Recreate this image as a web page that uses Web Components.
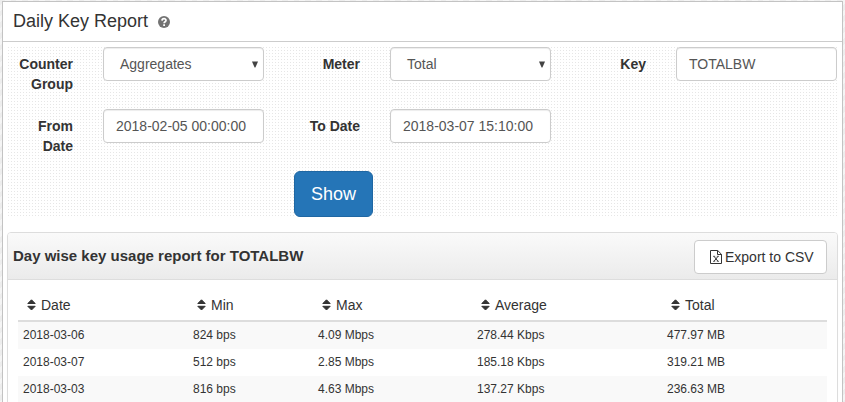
<!DOCTYPE html>
<html lang="en">
<head>
<meta charset="utf-8">
<title>Daily Key Report</title>
<style>
html, body { height: 100%; margin: 0; overflow: hidden; }
body {
  font: 14px/20px "Liberation Sans", Arial, sans-serif; color: #333;
  background: #f1f1f1 repeating-linear-gradient(135deg, #ededed 0 4px, #f5f5f5 4px 8px);
}
</style>
</head>
<body>
<report-page></report-page>

<template id="t-page">
<style>
:host { display: block; box-sizing: border-box; height: 402px; padding: 1px 2px 0; }
.frame { box-sizing: border-box; width: 841px; height: 420px; background: #fff; border: 1px solid #c3c3c3; }
header { box-sizing: border-box; height: 40px; padding: 8px 10px 10px; border-bottom: 1px solid #ccc; display: flex; align-items: center; gap: 10px; }
h1 { margin: 0; font-size: 18px; font-weight: 400; line-height: 20px; }
header svg { width: 12px; height: 12px; margin-top: 3px; }
.form {
  margin: 5px 5px 0; width: 830px; height: 170px; padding: 0; display: grid;
  grid-template-columns: 256px 287px 286px; grid-template-rows: 34px 34px 46px; row-gap: 28px;
  background: linear-gradient(90deg, transparent 1px, #fff 1px) 0 0 / 3px 3px, linear-gradient(#e6e6e6 1px, #fff 1px) 0 0 / 3px 3px;
}
show-button { grid-column: 1 / -1; margin-left: 286px; justify-self: start; }
report-panel { margin: 15px 0 0 4px; }
</style>
<div class="frame">
  <header>
    <h1>Daily Key Report</h1>
    <svg viewBox="0 0 12 12"><circle cx="6" cy="6" r="6" fill="#737373"/><path d="M4 4.6C4.1 2.1 8 2.1 8 4.4C8 5.8 6.1 5.7 6.1 7.2" fill="none" stroke="#fff" stroke-width="1.7"/><path d="M5.2 8.2h1.8v1.7H5.2z" fill="#fff"/></svg>
  </header>
  <div class="form">
    <form-field select label="Counter Group">Aggregates</form-field>
    <form-field select label="Meter">Total</form-field>
    <form-field label="Key">TOTALBW</form-field>
    <form-field label="From Date">2018-02-05 00:00:00</form-field>
    <form-field label="To Date">2018-03-07 15:10:00</form-field>
    <show-button>Show</show-button>
  </div>
  <report-panel>
    <span slot="title">Day wise key usage report for TOTALBW</span>
    <export-button slot="action">Export to CSV</export-button>
    <usage-table></usage-table>
  </report-panel>
</div>
</template>

<template id="t-field">
<style>
:host { display: flex; gap: 30px; height: 34px; }
label { flex: 1; min-width: 0; padding-top: 7px; text-align: right; font-weight: 700; }
.control {
  box-sizing: border-box; width: 161px; height: 34px; padding: 6px 12px; display: flex; justify-content: space-between; align-items: center;
  border: 1px solid #ccc; border-radius: 4px; background: #fff; color: #555;
  box-shadow: inset 0 1px 1px rgba(0,0,0,.075); white-space: nowrap;
}
svg { display: none; width: 6px; height: 7px; }
:host([select]) .control { padding: 6px 5px 6px 16px; }
:host([select]) svg { display: block; }
</style>
<label></label>
<div class="control"><slot></slot><svg viewBox="0 0 6 7"><path d="M0 .5h6L3.4 6.5h-.8z" fill="#444"/></svg></div>
</template>

<template id="t-show">
<style>
:host { display: block; }
button {
  display: block; box-sizing: border-box; width: 79px; height: 46px; padding: 0; border: 1px solid #1f67a3; border-radius: 6px;
  background: #2575b7; color: #fff; font: 18px/24px "Liberation Sans", Arial, sans-serif;
}
</style>
<button><slot></slot></button>
</template>

<template id="t-export">
<style>
:host { display: block; }
button {
  display: flex; box-sizing: border-box; width: 133px; height: 34px; padding: 0 12px 0 15px; align-items: center; gap: 3px;
  border: 1px solid #ccc; border-radius: 4px; background: #fff; color: #333; font: inherit; white-space: nowrap;
}
svg { width: 12px; height: 14px; flex: none; }
</style>
<button><svg viewBox="0 0 12 14" fill="none" stroke="#333"><path d="M.5.5h7.2l3.8 3.8v9.2H.5z"/><path d="M7.5.5v4h4"/><path d="M4 6.3l4 5M8 6.3l-4 5" stroke-width="1"/><path d="M3 6.3h2.2M6.8 6.3H9M3 11.3h2.2M6.8 11.3H9" stroke-width=".7"/></svg><slot></slot></button>
</template>

<template id="t-panel">
<style>
:host { display: block; box-sizing: border-box; width: 831px; height: 190px; border: 1px solid #ddd; border-radius: 4px 4px 0 0; box-shadow: 0 1px 1px rgba(0,0,0,.05); }
.head {
  display: flex; box-sizing: border-box; height: 47px; padding: 0 10px 0 5px; align-items: center; justify-content: space-between;
  border-bottom: 1px solid #ddd; border-radius: 3px 3px 0 0; background: linear-gradient(#fafafa, #ebebeb);
}
.title { font-weight: 700; font-size: 15px; }
.action { margin-top: 2px; }
.body { padding: 10px; }
</style>
<div class="head"><div class="title"><slot name="title"></slot></div><div class="action"><slot name="action"></slot></div></div>
<div class="body"><slot></slot></div>
</template>

<template id="t-table">
<style>
:host { display: block; width: 809px; }
.row { display: grid; grid-template-columns: 170px 125px 159px 190px 165px; }
.row > * { padding: 5px; }
.head { height: 30px; border-bottom: 2px solid #ddd; }
.head > * { display: flex; gap: 5px; padding: 5px 9px; }
.data { height: 27px; font-size: 12px; line-height: 17px; }
.data > * { padding-top: 5px; padding-bottom: 5px; }
.data:nth-child(even) { background: #f9f9f9; }
svg { width: 9px; height: 12px; margin-top: 4px; flex: none; }
</style>
<div id="rows"></div>
</template>

<script>
class TemplateElement extends HTMLElement {
  constructor() {
    super();
    this.attachShadow({ mode: 'open' }).append(document.getElementById(this.constructor.tpl).content.cloneNode(true));
  }
}
customElements.define('form-field', class extends TemplateElement {
  static tpl = 't-field';
  connectedCallback() { this.shadowRoot.querySelector('label').textContent = this.getAttribute('label'); }
});
customElements.define('show-button', class extends TemplateElement { static tpl = 't-show'; });
customElements.define('export-button', class extends TemplateElement { static tpl = 't-export'; });
customElements.define('report-panel', class extends TemplateElement { static tpl = 't-panel'; });
customElements.define('usage-table', class extends TemplateElement {
  static tpl = 't-table';
  connectedCallback() {
    const sort = '<svg viewBox="0 0 9 12"><path d="M.8 4.5L4.5 .8L8.2 4.5zM.8 7.3h7.4L4.5 11z" fill="#333" stroke="#333" stroke-linejoin="round"/></svg>';
    const data = [
      ['2018-03-06', '824 bps', '4.09 Mbps', '278.44 Kbps', '477.97 MB'],
      ['2018-03-07', '512 bps', '2.85 Mbps', '185.18 Kbps', '319.21 MB'],
      ['2018-03-03', '816 bps', '4.63 Mbps', '137.27 Kbps', '236.63 MB'],
    ];
    this.shadowRoot.getElementById('rows').innerHTML =
      '<div class="row head">' + ['Date', 'Min', 'Max', 'Average', 'Total'].map(h => `<div>${sort}<span>${h}</span></div>`).join('') + '</div>' +
      data.map(r => '<div class="row data">' + r.map(c => `<div>${c}</div>`).join('') + '</div>').join('');
  }
});
customElements.define('report-page', class extends TemplateElement { static tpl = 't-page'; });
</script>
</body>
</html>
